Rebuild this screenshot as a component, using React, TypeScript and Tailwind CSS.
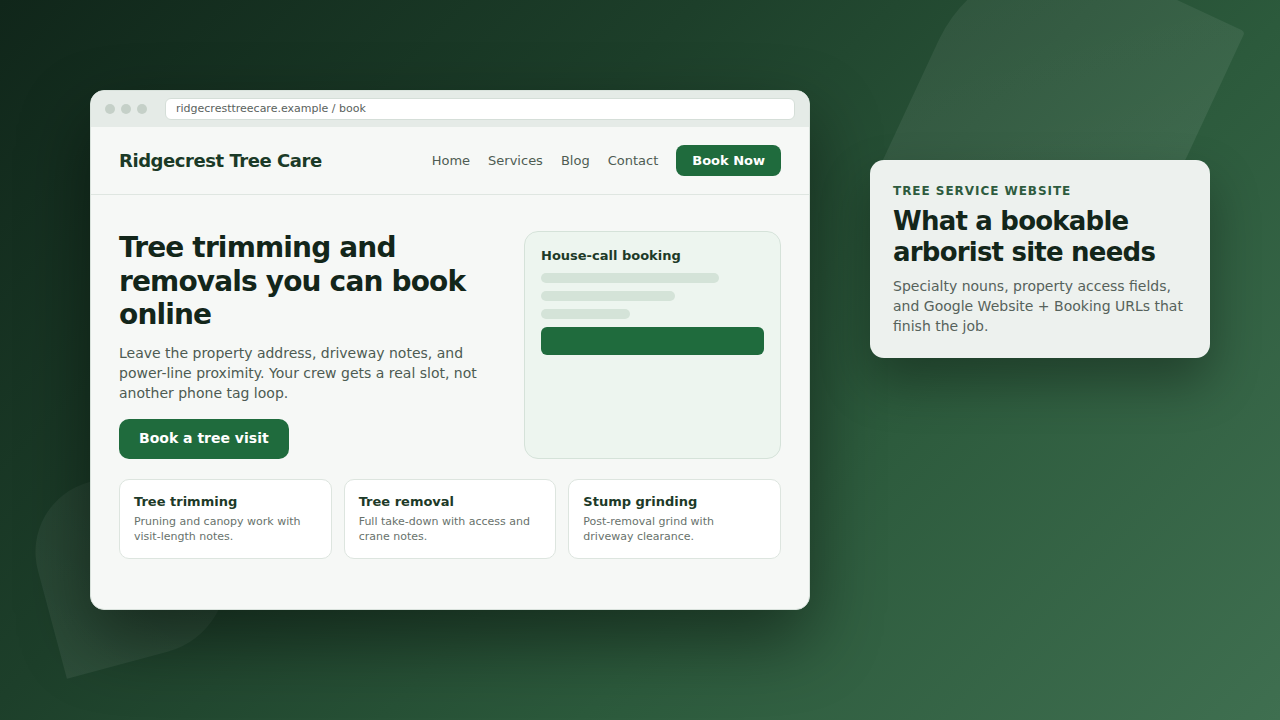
import React from "react";

const services = [
  { title: "Tree trimming", desc: "Pruning and canopy work with visit-length notes." },
  { title: "Tree removal", desc: "Full take-down with access and crane notes." },
  { title: "Stump grinding", desc: "Post-removal grind with driveway clearance." },
];

export default function App() {
  return (
    <div
      className="relative w-[1280px] h-[720px] overflow-hidden bg-[linear-gradient(135deg,#10261a_0%,#1d3f2a_35%,#2c5a3c_65%,#3f6f50_100%)]"
      style={{ fontFamily: '"DejaVu Sans", Verdana, sans-serif' }}
    >
      {/* decorative leaves */}
      <div className="absolute left-[926px] top-[-39px] w-[274px] h-[274px] rotate-[25deg] rounded-[137px_4px_137px_4px] bg-[linear-gradient(135deg,rgba(255,255,255,0.055),rgba(255,255,255,0.085))]" />
      <div className="absolute left-[40px] top-[474px] w-[184px] h-[184px] -rotate-[15deg] rounded-[72px_0_80px_0] bg-[linear-gradient(45deg,rgba(255,255,255,0.065),rgba(255,255,255,0.035))]" />

      <div className="relative flex items-start pl-[90px] pt-[90px] gap-[60px]">
        {/* browser window */}
        <div className="w-[720px] h-[520px] shrink-0 rounded-[14px] bg-[#f6f8f6] border border-[#d9e2dc] overflow-hidden shadow-[0_30px_70px_rgba(0,0,0,0.45)] flex flex-col">
          <div className="h-[36px] bg-[#e5ebe7] flex items-center pl-[14px] pr-[14px] gap-[18px]">
            <div className="flex gap-[6px]">
              <span className="w-[10px] h-[10px] rounded-full bg-[#c5d0c8]" />
              <span className="w-[10px] h-[10px] rounded-full bg-[#c5d0c8]" />
              <span className="w-[10px] h-[10px] rounded-full bg-[#c5d0c8]" />
            </div>
            <div className="flex-1 h-[22px] bg-white rounded-[6px] border border-[#d5ded8] flex items-center pl-[10px] text-[11px] text-[#5a625d]">
              ridgecresttreecare.example / book
            </div>
          </div>

          <div className="flex items-center justify-between px-7 py-[18px] border-b border-[#dfe6e1]">
            <div className="text-[18px] font-bold tracking-tight text-[#1b3a27]">Ridgecrest Tree Care</div>
            <div className="flex items-center gap-[18px] text-[13px] text-[#4e5c53]">
              <span>Home</span>
              <span>Services</span>
              <span>Blog</span>
              <span>Contact</span>
              <span className="h-[31px] px-4 rounded-lg bg-[#1f6b3d] text-white font-bold flex items-center">Book Now</span>
            </div>
          </div>

          <div className="px-7 pt-9">
            <div className="grid grid-cols-[1fr_257px] gap-6">
              <div className="flex flex-col items-start">
                <h1 className="text-[28px] leading-[1.2] font-bold tracking-[-0.03em] text-[#13261a]">
                  Tree trimming and removals you can book online
                </h1>
                <p className="mt-[11px] text-[14px] leading-[20px] text-[#4d5b52]">
                  Leave the property address, driveway notes, and power-line proximity. Your crew gets a real slot, not another phone tag loop.
                </p>
                <span className="mt-4 h-10 px-5 rounded-[10px] bg-[#1f6b3d] text-white text-[14px] font-bold flex items-center">
                  Book a tree visit
                </span>
              </div>
              <div className="rounded-[14px] bg-[#edf5ef] border border-[#d5e2d9] p-4">
                <div className="text-[13px] leading-4 font-bold text-[#1d3a28]">House-call booking</div>
                <div className="mt-[9px] flex flex-col gap-2">
                  <div className="h-[10px] w-[80%] rounded-full bg-[#d4e3d8]" />
                  <div className="h-[10px] w-[60%] rounded-full bg-[#d4e3d8]" />
                  <div className="h-[10px] w-[40%] rounded-full bg-[#d4e3d8]" />
                  <div className="h-[28px] w-full rounded-[6px] bg-[#1f6b3d]" />
                </div>
              </div>
            </div>

            <div className="mt-5 grid grid-cols-3 gap-3">
              {services.map((s) => (
                <div key={s.title} className="bg-white border border-[#dde5df] rounded-[10px] p-[14px]">
                  <div className="text-[13px] leading-4 font-bold text-[#1d3a28]">{s.title}</div>
                  <div className="mt-[4px] text-[11px] leading-[15px] text-[#68726c]">{s.desc}</div>
                </div>
              ))}
            </div>
          </div>
        </div>

        {/* side card */}
        <div className="mt-[70px] w-[340px] shrink-0 rounded-[14px] bg-[#edf1ee] shadow-[0_24px_50px_rgba(0,0,0,0.32)] pl-[23px] pr-[21px] pt-[23px] pb-[22px]">
          <div className="text-[12px] leading-4 font-bold uppercase tracking-[0.08em] text-[#2e5b3e]">Tree service website</div>
          <h2 className="mt-[7px] text-[26px] leading-[1.2] font-bold tracking-[-0.03em] text-[#13261a]">
            What a bookable arborist site needs
          </h2>
          <p className="mt-[8px] text-[14px] leading-[20px] text-[#56625b]">
            Specialty nouns, property access fields, and Google Website + Booking URLs that finish the job.
          </p>
        </div>
      </div>
    </div>
  );
}
